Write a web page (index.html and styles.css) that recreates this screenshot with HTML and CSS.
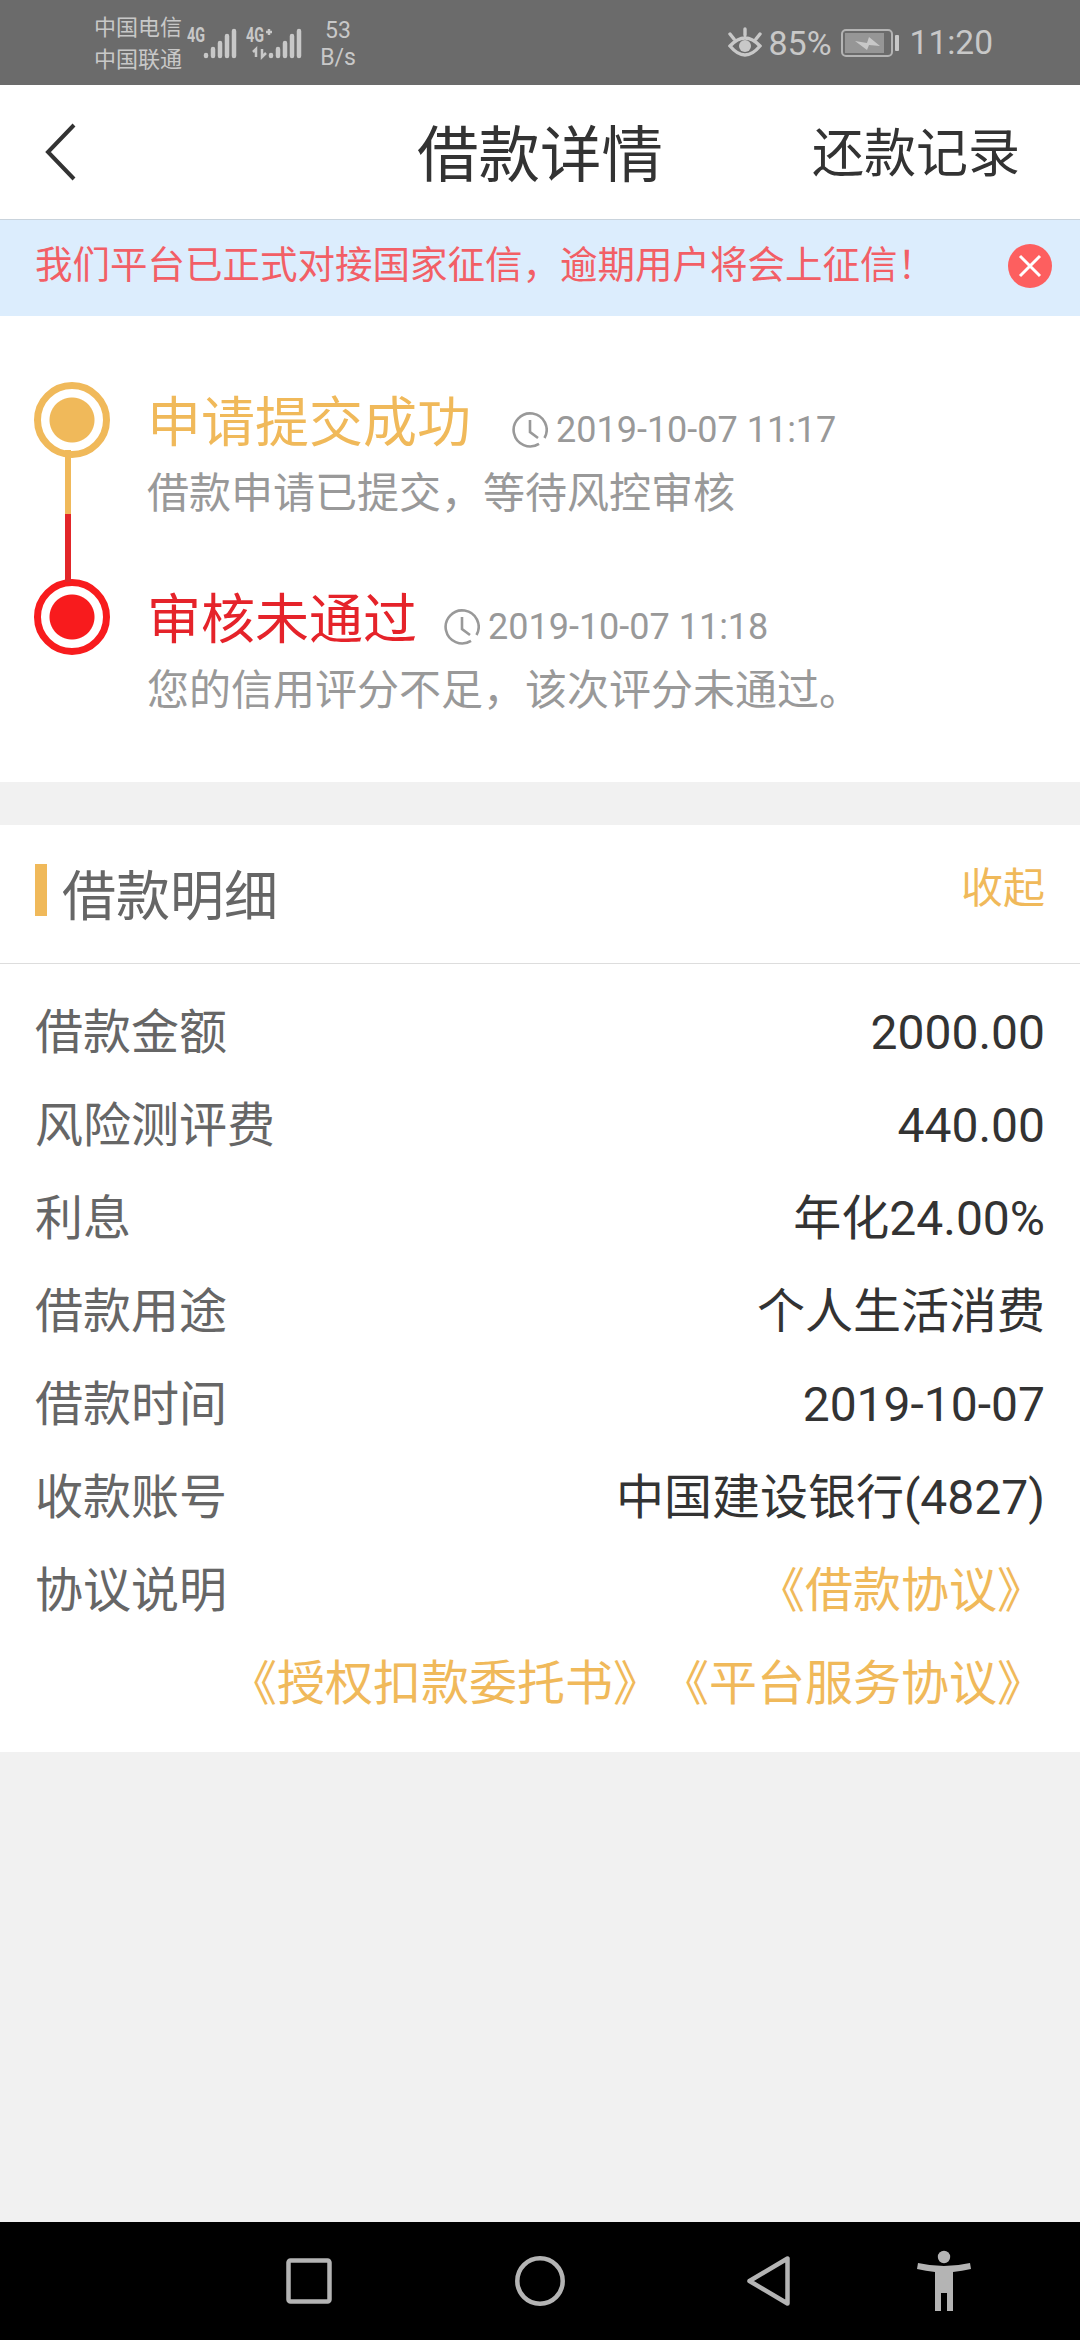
FILE: index.html
```html
<!DOCTYPE html>
<html lang="zh-CN">
<head>
    <meta charset="UTF-8">
    <meta name="viewport" content="width=device-width, initial-scale=1.0">
    <title>借款详情</title>
    <link rel="stylesheet" href="styles.css">
</head>
<body>
    <div class="status-bar">
        <div class="carriers">
            <span>中国电信</span>
            <span>中国联通</span>
        </div>
        <svg class="signals" width="118" height="40" viewBox="0 0 118 40">
            <text x="0" y="19" textLength="18" lengthAdjust="spacingAndGlyphs">4G</text>
            <path d="M19 32v1M26 26v7M33 20v13M40 13v20M47 8v25" />
            <text x="59" y="19" textLength="18" lengthAdjust="spacingAndGlyphs">4G</text>
            <path class="thin" d="M79 9h6M82 6v6" />
            <path class="thin" d="M66 29l3-3v8M75 26v8l4-4" />
            <path d="M84 32v1M91 26v7M98 20v13M105 13v20M112 8v25" />
        </svg>
        <div class="speed">
            <span>53</span>
            <span>B/s</span>
        </div>
        <div class="status-right">
            <svg class="eye" width="34" height="32" viewBox="0 0 34 32">
                <path d="M2 19Q17 3 32 19Q17 37 2 19zM17 2v6M2 7l4 5M32 7l-4 5" />
                <circle cx="17" cy="19" r="6" />
            </svg>
            <span class="percent">85%</span>
            <svg class="battery" width="60" height="28" viewBox="0 0 60 28">
                <rect class="shell" x="1" y="1" width="50" height="26" rx="4" />
                <rect class="level" x="4" y="4" width="39" height="20" />
                <path d="M14 12l12 2 2-6 11 9-11-1-2 5z" />
                <rect x="54" y="6" width="4" height="16" rx="1" />
            </svg>
            <span class="clock">11:20</span>
        </div>
    </div>

    <div class="header">
        <svg class="back" width="34" height="58" viewBox="0 0 34 58">
            <path d="M30 2L4 29l26 27" />
        </svg>
        <h1 class="title">借款详情</h1>
        <a class="records">还款记录</a>
    </div>

    <div class="notice">
        <span>我们平台已正式对接国家征信，逾期用户将会上征信！</span>
        <svg class="close" width="44" height="44" viewBox="0 0 44 44">
            <circle cx="22" cy="22" r="22" />
            <path d="M12 12l20 20M32 12L12 32" />
        </svg>
    </div>

    <div class="timeline">
        <div class="step success">
            <div class="dot"></div>
            <div class="step-content">
                <div class="step-head">
                    <span class="step-title">申请提交成功</span>
                    <svg class="time-icon" width="36" height="36" viewBox="0 0 36 36">
                        <path d="M32.5 26A16.5 16.5 0 1 0 27 31.8M18 8v12l8 6" />
                    </svg>
                    <span class="time">2019-10-07 11:17</span>
                </div>
                <p class="step-desc">借款申请已提交，等待风控审核</p>
            </div>
        </div>
        <div class="step failed">
            <div class="dot"></div>
            <div class="step-content">
                <div class="step-head">
                    <span class="step-title">审核未通过</span>
                    <svg class="time-icon" width="36" height="36" viewBox="0 0 36 36">
                        <path d="M32.5 26A16.5 16.5 0 1 0 27 31.8M18 8v12l8 6" />
                    </svg>
                    <span class="time">2019-10-07 11:18</span>
                </div>
                <p class="step-desc">您的信用评分不足，该次评分未通过。</p>
            </div>
        </div>
    </div>

    <div class="detail">
        <div class="detail-head">
            <h2 class="detail-title">借款明细</h2>
            <a class="toggle">收起</a>
        </div>
        <div class="detail-list">
            <div class="row"><span class="label">借款金额</span><span>2000.00</span></div>
            <div class="row"><span class="label">风险测评费</span><span>440.00</span></div>
            <div class="row"><span class="label">利息</span><span>年化24.00%</span></div>
            <div class="row"><span class="label">借款用途</span><span>个人生活消费</span></div>
            <div class="row"><span class="label">借款时间</span><span>2019-10-07</span></div>
            <div class="row"><span class="label">收款账号</span><span>中国建设银行(4827)</span></div>
            <div class="row">
                <span class="label">协议说明</span>
                <div class="links">
                    <div><a>《借款协议》</a></div>
                    <div><a>《授权扣款委托书》</a><a>《平台服务协议》</a></div>
                </div>
            </div>
        </div>
    </div>

    <div class="nav-bar">
        <svg class="nav-recent" width="46" height="46" viewBox="0 0 46 46">
            <rect x="2.5" y="2.5" width="41" height="41" rx="2" />
        </svg>
        <svg class="nav-home" width="50" height="50" viewBox="0 0 50 50">
            <circle cx="25" cy="25" r="22.7" />
        </svg>
        <svg class="nav-back" width="44" height="50" viewBox="0 0 44 50">
            <path d="M40.5 2.5v45L2.5 25z" />
        </svg>
        <svg class="nav-access" width="54" height="62" viewBox="0 0 54 62">
            <circle cx="27" cy="7" r="6.2" />
            <path d="M1 13q26 6 52 0l1 6q-9 2-18 3v39h-6V43h-6v18h-6V22q-9-1-18-3z" />
        </svg>
    </div>
</body>
</html>
```

FILE: styles.css
```css
* {
    box-sizing: border-box;
    margin: 0;
    padding: 0;
}

body {
    width: 1080px;
    height: 2340px;
    display: flex;
    flex-direction: column;
    background-color: #f1f1f1;
    font-family: Roboto, "Noto Sans CJK SC", sans-serif;
    text-spacing-trim: space-all;
    color: #333;
    overflow: hidden;
}

h1, h2 {
    font-weight: normal;
}

svg {
    display: block;
    flex-shrink: 0;
}

/* status bar */
.status-bar {
    height: 85px;
    display: flex;
    align-items: center;
    padding: 0 87px 0 94px;
    background-color: #6b6b6b;
    color: #c8c8c8;
}

.carriers, .speed {
    display: flex;
    flex-direction: column;
}

.carriers {
    font-size: 22px;
    line-height: 32px;
    padding-top: 2px;
}

.signals {
    margin-left: 5px;
    stroke: #c8c8c8;
    stroke-width: 4.5;
    stroke-linecap: round;
    fill: none;
}

.signals text {
    font-size: 20px;
    font-weight: bold;
    fill: #c8c8c8;
    stroke: none;
}

.signals .thin {
    stroke-width: 2.5;
    stroke-linecap: butt;
}

.speed {
    margin-left: 10px;
    width: 46px;
    font-size: 23px;
    line-height: 27px;
    text-align: center;
    padding-top: 2px;
}

.status-right {
    display: flex;
    align-items: center;
    margin-left: auto;
    font-size: 34px;
    line-height: 40px;
    padding-top: 1px;
}

.eye {
    fill: none;
    stroke: #c8c8c8;
    stroke-width: 3.4;
    stroke-linecap: round;
}

.eye circle {
    fill: #c8c8c8;
    stroke: none;
}

.percent {
    margin-left: 6px;
}

.battery {
    margin-left: 9px;
    fill: #c8c8c8;
}

.battery .shell {
    fill: none;
    stroke: #b4b4b4;
    stroke-width: 2;
}

.battery .level {
    fill: #969696;
}

.clock {
    margin-left: 9px;
    font-size: 33.5px;
}

/* header */
.header {
    height: 135px;
    display: grid;
    grid-template-columns: 1fr auto 1fr;
    align-items: center;
    padding: 0 60px 0 44px;
    background-color: #fff;
    border-bottom: 1px solid #c9d3dc;
}

.back {
    fill: none;
    stroke: #333;
    stroke-width: 4;
}

.title {
    margin-left: 16px;
    padding-top: 7px;
    font-size: 61.5px;
    line-height: 72px;
}

.records {
    justify-self: end;
    padding-top: 5px;
    font-size: 52px;
    line-height: 60px;
}

.notice {
    height: 96px;
    display: flex;
    justify-content: space-between;
    align-items: center;
    padding: 0 28px 4px 35px;
    background-color: #dcedfd;
    color: #f25f66;
    font-size: 37.5px;
    line-height: 44px;
}

.notice span {
    padding-bottom: 2px;
}

.close {
    fill: #fd5f5f;
}

.close path {
    stroke: #fff;
    stroke-width: 3;
}

/* timeline */
.timeline {
    height: 466px;
    padding: 66px 34px 0;
    background-color: #fff;
}

.step {
    position: relative;
    display: flex;
    height: 197px;
}

.dot {
    width: 76px;
    height: 76px;
    border: 7px solid currentColor;
    border-radius: 50%;
    background: radial-gradient(circle, currentColor 22px, #fff 23px);
}

.success {
    color: #f0b95a;
}

.failed {
    color: #f81b1d;
}

/* connecting line between the two dots */
.step::after {
    content: "";
    position: absolute;
    left: 31px;
    width: 6px;
    background-color: currentColor;
}

.success::after {
    top: 68px;
    height: 64px;
}

.failed::after {
    top: -65px;
    height: 68px;
    background-color: #e22629;
}

.step-content {
    margin-left: 37px;
}

.step-head {
    display: flex;
    align-items: center;
    height: 84px;
}

.step-title {
    font-size: 54px;
    line-height: 64px;
}

.failed .step-title {
    color: #e5232a;
}

.time-icon {
    margin: 12px 0 0 41px;
    fill: none;
    stroke: #999;
    stroke-width: 2.6;
}

.failed .time-icon {
    margin-left: 27px;
}

.time {
    margin: 11px 0 0 8px;
    font-size: 36px;
    line-height: 42px;
    color: #999;
}

.step-desc {
    font-size: 42px;
    line-height: 56px;
    color: #999;
}

/* loan detail */
.detail {
    margin-top: 43px;
    background-color: #fff;
}

.detail-head {
    height: 139px;
    display: flex;
    justify-content: space-between;
    align-items: center;
    padding: 0 35px;
    border-bottom: 1px solid #ddd;
}

.detail-title {
    display: flex;
    align-items: center;
    padding-top: 7px;
    font-size: 54px;
    line-height: 64px;
    color: #666;
}

.detail-title::before {
    content: "";
    width: 12px;
    height: 52px;
    margin: 0 15px 16px 0;
    background-color: #f0b95a;
}

.toggle {
    padding-bottom: 10px;
    font-size: 42px;
    line-height: 50px;
    color: #f0b95a;
}

.detail-list {
    padding: 22px 35px;
}

.row {
    display: flex;
    justify-content: space-between;
    font-size: 48px;
    line-height: 93px;
}

.label {
    color: #666;
}

.links {
    text-align: right;
    color: #f0b95a;
}

/* bottom navigation */
.nav-bar {
    height: 118px;
    display: flex;
    align-items: center;
    margin-top: auto;
    padding-left: 286px;
    background-color: #000;
    fill: none;
    stroke: #b4b4b4;
    stroke-width: 4.5;
    stroke-linejoin: round;
}

.nav-home {
    margin-left: 183px;
}

.nav-back {
    margin-left: 182px;
}

.nav-access {
    margin-left: 126px;
    fill: #b4b4b4;
    stroke: none;
}
```
